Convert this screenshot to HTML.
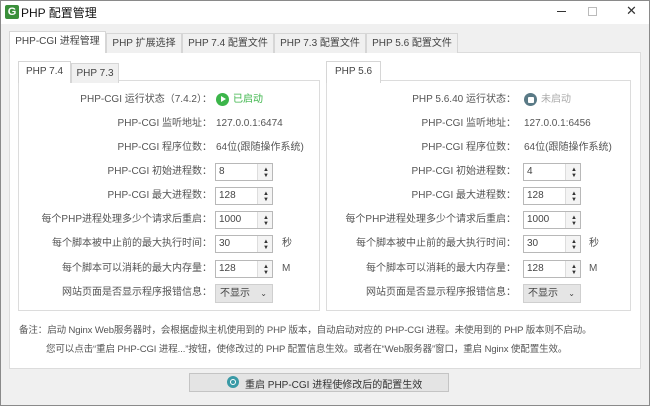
<!DOCTYPE html>
<html><head><meta charset="utf-8"><style>
*{margin:0;padding:0;box-sizing:border-box}
body{width:650px;height:406px;overflow:hidden;background:#f0f0f0;font-family:"Liberation Sans","Noto Sans CJK SC",sans-serif;font-size:10px;color:#555;position:relative}
.a{position:absolute;white-space:nowrap}
.win{position:absolute;left:0;top:0;width:650px;height:406px;border:1px solid #8a8a8a}
.title{position:absolute;left:1px;top:1px;width:648px;height:23px;background:#fff}
.panel{background:#fff;border:1px solid #dcdcdc}
.tab{position:absolute;height:20px;border:1px solid #d6d6d6;border-bottom:none;background:#f0f0f0;line-height:19px;text-align:center;color:#444}
.tab.on{background:#fff;height:22px}
.lbl{position:absolute;text-align:right;white-space:nowrap;line-height:14px}
.val{position:absolute;white-space:nowrap;line-height:14px}
.inp{position:absolute;width:58px;height:18px;border:1px solid #b8b8b8;background:#fff;line-height:16px;padding-left:3px;color:#444}
.inp:after{content:"";position:absolute;right:0;top:0;width:14px;height:16px;border-left:1px solid #ddd;background:#f4f4f4}
.sp{position:absolute;right:3px;font-size:6px;line-height:6px;color:#333;z-index:2}
.sel{position:absolute;width:58px;height:19px;border:1px solid #cfcfcf;background:#e5e5e5;line-height:17px;padding-left:4px;color:#444}
</style></head><body>
<div class="win"></div>
<div class="title"></div>
<div class="a" style="left:5px;top:5px;width:14px;height:14px;background:#3a8f3a;border-radius:2px;color:#fff;font-weight:bold;font-size:11px;line-height:14px;text-align:center">G</div>
<div class="a" style="left:21px;top:4px;font-size:12px;color:#111">PHP 配置管理</div>
<div class="a" style="left:557px;top:11px;width:9px;height:1px;background:#333"></div>
<div class="a" style="left:588px;top:7px;width:9px;height:9px;border:1px solid #bbb"></div>
<div class="a" style="left:626px;top:3px;font-size:13px;color:#333">✕</div>

<div class="a panel" style="left:9px;top:52px;width:632px;height:317px"></div>
<div class="tab on" style="left:9px;top:31px;width:97px">PHP-CGI 进程管理</div>
<div class="tab" style="left:106px;top:33px;width:76px">PHP 扩展选择</div>
<div class="tab" style="left:182px;top:33px;width:92px">PHP 7.4 配置文件</div>
<div class="tab" style="left:274px;top:33px;width:92px">PHP 7.3 配置文件</div>
<div class="tab" style="left:366px;top:33px;width:92px">PHP 5.6 配置文件</div>

<div class="a panel" style="left:18px;top:80px;width:302px;height:231px"></div>
<div class="tab on" style="left:18px;top:61px;width:53px">PHP 7.4</div>
<div class="tab" style="left:71px;top:63px;width:48px">PHP 7.3</div>
<div class="a panel" style="left:326px;top:80px;width:305px;height:231px"></div>
<div class="tab on" style="left:326px;top:61px;width:55px">PHP 5.6</div>

<!-- left -->
<div class="lbl" style="right:438px;top:93px">PHP-CGI 运行状态（7.4.2）：</div>
<div class="a" style="left:216px;top:93px;width:13px;height:13px;border-radius:50%;background:#3cb54a"></div>
<div class="a" style="left:221px;top:96px;width:0;height:0;border-left:5px solid #fff;border-top:3.5px solid transparent;border-bottom:3.5px solid transparent"></div>
<div class="val" style="left:233px;top:93px;color:#3cb54a">已启动</div>
<div class="lbl" style="right:438px;top:117px">PHP-CGI 监听地址：</div><div class="val" style="left:216px;top:117px">127.0.0.1:6474</div>
<div class="lbl" style="right:438px;top:141px">PHP-CGI 程序位数：</div><div class="val" style="left:216px;top:141px">64位(跟随操作系统)</div>
<div class="lbl" style="right:438px;top:165px">PHP-CGI 初始进程数：</div><div class="inp" style="left:215px;top:163px">8<span class="sp" style="top:3px">▲<br>▼</span></div>
<div class="lbl" style="right:438px;top:189px">PHP-CGI 最大进程数：</div><div class="inp" style="left:215px;top:187px">128<span class="sp" style="top:3px">▲<br>▼</span></div>
<div class="lbl" style="right:438px;top:213px">每个PHP进程处理多少个请求后重启：</div><div class="inp" style="left:215px;top:211px">1000<span class="sp" style="top:3px">▲<br>▼</span></div>
<div class="lbl" style="right:438px;top:237px">每个脚本被中止前的最大执行时间：</div><div class="inp" style="left:215px;top:235px">30<span class="sp" style="top:3px">▲<br>▼</span></div><div class="val" style="left:282px;top:237px">秒</div>
<div class="lbl" style="right:438px;top:262px">每个脚本可以消耗的最大内存量：</div><div class="inp" style="left:215px;top:260px">128<span class="sp" style="top:3px">▲<br>▼</span></div><div class="val" style="left:282px;top:262px">M</div>
<div class="lbl" style="right:438px;top:286px">网站页面是否显示程序报错信息：</div><div class="sel" style="left:215px;top:284px">不显示<span style="position:absolute;right:5px;font-size:8px">⌄</span></div>

<!-- right -->
<div class="lbl" style="right:134px;top:93px">PHP 5.6.40 运行状态：</div>
<div class="a" style="left:524px;top:93px;width:13px;height:13px;border-radius:50%;background:#5a7a86"></div>
<div class="a" style="left:527.5px;top:96.5px;width:6px;height:6px;border-radius:1px;background:#fff"></div>
<div class="val" style="left:541px;top:93px;color:#aaa">未启动</div>
<div class="lbl" style="right:134px;top:117px">PHP-CGI 监听地址：</div><div class="val" style="left:524px;top:117px">127.0.0.1:6456</div>
<div class="lbl" style="right:134px;top:141px">PHP-CGI 程序位数：</div><div class="val" style="left:524px;top:141px">64位(跟随操作系统)</div>
<div class="lbl" style="right:134px;top:165px">PHP-CGI 初始进程数：</div><div class="inp" style="left:523px;top:163px">4<span class="sp" style="top:3px">▲<br>▼</span></div>
<div class="lbl" style="right:134px;top:189px">PHP-CGI 最大进程数：</div><div class="inp" style="left:523px;top:187px">128<span class="sp" style="top:3px">▲<br>▼</span></div>
<div class="lbl" style="right:134px;top:213px">每个PHP进程处理多少个请求后重启：</div><div class="inp" style="left:523px;top:211px">1000<span class="sp" style="top:3px">▲<br>▼</span></div>
<div class="lbl" style="right:134px;top:237px">每个脚本被中止前的最大执行时间：</div><div class="inp" style="left:523px;top:235px">30<span class="sp" style="top:3px">▲<br>▼</span></div><div class="val" style="left:589px;top:237px">秒</div>
<div class="lbl" style="right:134px;top:262px">每个脚本可以消耗的最大内存量：</div><div class="inp" style="left:523px;top:260px">128<span class="sp" style="top:3px">▲<br>▼</span></div><div class="val" style="left:589px;top:262px">M</div>
<div class="lbl" style="right:134px;top:286px">网站页面是否显示程序报错信息：</div><div class="sel" style="left:523px;top:284px">不显示<span style="position:absolute;right:5px;font-size:8px">⌄</span></div>

<div class="a" style="left:19px;top:322px;font-size:9.5px;letter-spacing:-0.1px">备注：启动 Nginx Web服务器时，会根据虚拟主机使用到的 PHP 版本，自动启动对应的 PHP-CGI 进程。未使用到的 PHP 版本则不启动。</div>
<div class="a" style="left:46px;top:341px;font-size:9.5px;letter-spacing:-0.1px">您可以点击“重启 PHP-CGI 进程...”按钮，使修改过的 PHP 配置信息生效。或者在“Web服务器”窗口，重启 Nginx 使配置生效。</div>

<div class="a" style="left:189px;top:373px;width:260px;height:19px;border:1px solid #c4c4c4;background:#e4e4e4"></div>
<div class="a" style="left:227px;top:376px;width:12px;height:12px;border-radius:50%;background:#3a9aa6"></div>
<div class="a" style="left:230px;top:379px;width:6px;height:6px;border-radius:50%;border:1.3px solid #fff"></div>
<div class="a" style="left:245px;top:376px;color:#333">重启 PHP-CGI 进程使修改后的配置生效</div>
</body></html>
